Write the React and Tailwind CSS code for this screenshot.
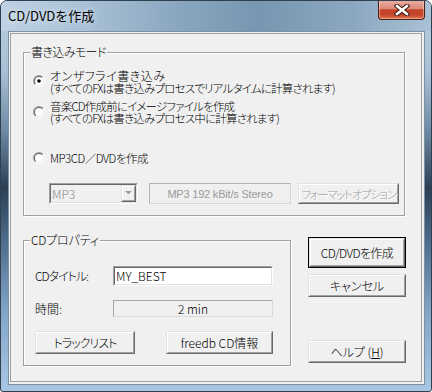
import React from "react";

function Radio({ checked, className = "" }) {
  return (
    <svg width="12" height="12" viewBox="0 0 12 12" className={"shrink-0 " + className}>
      <defs>
        <linearGradient id="rOuter" x1="0" y1="0" x2="1" y2="1">
          <stop offset="0.5" stopColor="#a0a0a0" />
          <stop offset="0.5" stopColor="#ffffff" />
        </linearGradient>
        <linearGradient id="rInner" x1="0" y1="0" x2="1" y2="1">
          <stop offset="0.5" stopColor="#696969" />
          <stop offset="0.5" stopColor="#e3e3e3" />
        </linearGradient>
      </defs>
      <circle cx="6" cy="6" r="6" fill="url(#rOuter)" />
      <circle cx="6" cy="6" r="5" fill="url(#rInner)" />
      <circle cx="6" cy="6" r="4" fill="#ffffff" />
      {checked && <circle cx="6" cy="6" r="1.8" fill="#000000" />}
    </svg>
  );
}

function Raised({ className = "", isDefault = false, children }) {
  return (
    <div className={className + (isDefault ? " border border-black" : "")}>
      <div className="h-full border border-t-[#e3e3e3] border-l-[#e3e3e3] border-r-[#696969] border-b-[#696969]">
        <div className="h-full border border-t-white border-l-white border-r-[#a0a0a0] border-b-[#a0a0a0] flex items-center justify-center whitespace-nowrap">
          {children}
        </div>
      </div>
    </div>
  );
}

function Group({ title, className = "", titleClass = "", children }) {
  return (
    <div className={"relative border border-[#a0a0a0] shadow-[inset_1px_1px_0_#ffffff,1px_1px_0_#ffffff] " + className}>
      <span className={"absolute left-[6px] top-[-7px] px-[1px] bg-[#f0f0f0] leading-[12px] whitespace-nowrap " + titleClass}>
        {title}
      </span>
      {children}
    </div>
  );
}

export default function App() {
  return (
    <div className="w-[432px] h-[392px] bg-white font-['Noto_Sans_CJK_JP','Noto_Sans',sans-serif] font-light [font-feature-settings:'palt'] text-[12px] leading-[12px] text-black">
      <div className="h-full rounded-t-[7px] rounded-b-[3px] border border-[#31404f] flex flex-col overflow-hidden bg-[linear-gradient(180deg,#b8cde0_0%,#a9c1d6_18%,#6f8aa5_33%,#2b3f54_48%,#496785_60%,#83a6c8_80%,#a9c7e3_100%)]">
        {/* title bar */}
        <div className="h-[30px] shrink-0 flex items-start bg-[linear-gradient(90deg,#bfd2e4_0%,#abc2d7_18%,#89a6bf_42%,#7896b1_60%,#8ca8c1_82%,#a9c1d6_100%)]">
          <div className="pl-[7px] pt-[8px] text-[13px] leading-[14px] font-normal [text-shadow:0_0_6px_rgba(255,255,255,0.9)] [font-feature-settings:normal]">
            CD/DVDを作成
          </div>
          <div className="ml-auto mr-[6px] mt-[-1px] w-[47px] h-[20px] rounded-b-[4px] border border-t-0 border-[#4b1c14] bg-[linear-gradient(180deg,#eab0a3_0%,#dc8a78_45%,#c4432b_52%,#c4452b_78%,#de7650_100%)] shadow-[inset_0_0_0_1px_rgba(255,230,220,0.45)] flex items-center justify-center">
            <svg width="16" height="12" viewBox="0 0 16 12">
              <path d="M3 2 L13 10 M13 2 L3 10" stroke="#3a1710" strokeWidth="4.6" strokeLinecap="square" />
              <path d="M3 2 L13 10 M13 2 L3 10" stroke="#ffffff" strokeWidth="2.6" strokeLinecap="square" />
            </svg>
          </div>
        </div>

        {/* client */}
        <div className="ml-[7px] mr-[6px] h-[354px] shrink-0 bg-[#f0f0f0] border border-[#7d91a6] pl-[1px] pt-[1px] pr-[2px] pb-[2px]">
          <div className="h-full border border-[#a0a0a0] flex flex-col">
            <Group title="書き込みモード" titleClass="tracking-[-0.6px]" className="ml-[12px] mt-[18px] w-[382px] h-[164px] shrink-0">
              <div className="flex flex-col pl-[9px] pt-[17px]">
                <div className="flex">
                  <Radio checked className="mt-[5px]" />
                  <div className="ml-[5px] whitespace-nowrap">
                    <div className="tracking-[0.5px]">オンザフライ書き込み</div>
                    <div className="text-[11.5px] tracking-[-0.8px]">(すべてのFXは書き込みプロセスでリアルタイムに計算されます)</div>
                  </div>
                </div>
                <div className="flex mt-[6px]">
                  <Radio className="mt-[6px]" />
                  <div className="ml-[5px] whitespace-nowrap text-[11.5px] tracking-[-0.8px]">
                    <div>音楽CD作成前にイメージファイルを作成</div>
                    <div>(すべてのFXは書き込みプロセス中に計算されます)</div>
                  </div>
                </div>
                <div className="flex mt-[28px]">
                  <Radio />
                  <div className="ml-[5px] whitespace-nowrap text-[11.5px] tracking-[-0.5px]">MP3CD／DVDを作成</div>
                </div>
                <div className="flex mt-[19px] ml-[16px] h-[21px]">
                  <div className="w-[89px] h-full border border-t-[#a0a0a0] border-l-[#a0a0a0] border-r-white border-b-white">
                    <div className="h-full border border-t-[#696969] border-l-[#696969] border-r-[#e3e3e3] border-b-[#e3e3e3] flex items-center">
                      <span className="pl-[1px] text-[#8a8a8a]">MP3</span>
                      <Raised className="ml-auto w-[15px] h-full">
                        <svg width="7" height="5" viewBox="0 0 7 5">
                          <path d="M1 1 L7 1 L4 4 Z" fill="#ffffff" />
                          <path d="M0 0 L7 0 L3.5 3.5 Z" fill="#a0a0a0" />
                        </svg>
                      </Raised>
                    </div>
                  </div>
                  <div className="ml-[11px] w-[142px] h-full border border-t-[#b4b4b4] border-l-[#b4b4b4] border-r-[#d6d6d6] border-b-[#d6d6d6] flex items-center justify-center text-[#9a9a9a] font-['Liberation_Sans',sans-serif] font-normal text-[11px] tracking-[-0.2px] whitespace-nowrap">
                    MP3 192 kBit/s Stereo
                  </div>
                  <Raised className="ml-[7px] w-[101px] h-full">
                    <span className="text-[#a0a0a0] [text-shadow:1px_1px_0_#ffffff] text-[11.5px] tracking-[-1.3px]">フォーマットオプション</span>
                  </Raised>
                </div>
              </div>
            </Group>

            <div className="flex mt-[21px] ml-[12px]">
              <Group title="CDプロパティ" titleClass="tracking-[-0.2px]" className="mt-[3px] w-[268px] h-[126px] shrink-0">
                <div className="flex flex-col pl-[11px] pt-[25px]">
                  <div className="flex items-center h-[20px]">
                    <div className="w-[78px] tracking-[-1px]">CDタイトル:</div>
                    <div className="w-[160px] h-full bg-white border border-t-[#a0a0a0] border-l-[#a0a0a0] border-r-white border-b-white">
                      <div className="h-full border border-t-[#696969] border-l-[#696969] border-r-[#e3e3e3] border-b-[#e3e3e3] flex items-center pl-[1px]">
                        MY_BEST
                      </div>
                    </div>
                  </div>
                  <div className="flex items-center h-[17px] mt-[14px]">
                    <div className="w-[78px]">時間:</div>
                    <div className="w-[160px] h-full border border-t-[#a8a8a8] border-l-[#a8a8a8] border-r-[#dcdcdc] border-b-[#dcdcdc] flex items-center justify-center">
                      2 min
                    </div>
                  </div>
                  <div className="flex h-[23px] mt-[14px]">
                    <Raised className="w-[100px] h-full">
                      <span className="tracking-[-1px]">トラックリスト</span>
                    </Raised>
                    <Raised className="ml-[31px] w-[107px] h-full">freedb CD情報</Raised>
                  </div>
                </div>
              </Group>

              <div className="ml-[17px] w-[98px] flex flex-col">
                <Raised isDefault className="h-[31px]">
                  <span className="tracking-[-0.6px]">CD/DVDを作成</span>
                </Raised>
                <Raised className="h-[23px] mt-[6px]">キャンセル</Raised>
                <Raised className="h-[23px] mt-[43px]">
                  <span>
                    ヘルプ (<span className="underline underline-offset-[1px]">H</span>)
                  </span>
                </Raised>
              </div>
            </div>
          </div>
        </div>
      </div>
    </div>
  );
}
